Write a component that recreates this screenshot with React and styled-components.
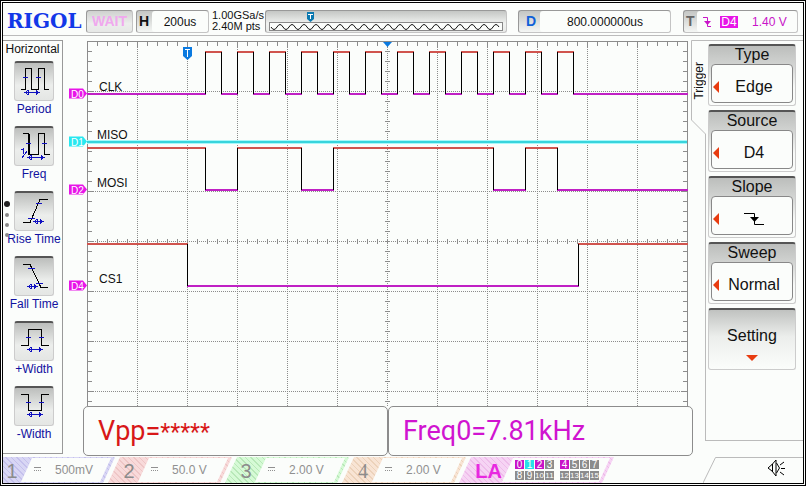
import React from 'react';
import styled, { createGlobalStyle } from 'styled-components';

const GlobalStyle = createGlobalStyle`
  * {
    box-sizing: border-box;
  }

  body {
    margin: 0;
    background: #fbfdfb;
    color: #111;
    font-family: "Liberation Sans", Arial, sans-serif;
    font-size: 12px;
  }

  button {
    padding: 0;
    color: inherit;
    font: inherit;
    cursor: pointer;
  }

  svg {
    display: block;
  }
`;

const Screen = styled.div`
  display: flex;
  flex-direction: column;
  min-height: 100vh;
  border: 3px double #000;
  overflow: hidden;
`;

const TopBar = styled.header`
  display: flex;
  align-items: center;
  gap: 3px;
  height: 33px;
  padding: 4px 5px 0 4px;
  border-bottom: 1px solid #bbb;
`;

const Logo = styled.div`
  width: 76px;
  color: #1238e8;
  font: bold 20px/22px "DejaVu Serif", serif;
`;

const panelFrame = `
  border: 1px solid #999;
  border-right-color: #c4c4c4;
  border-bottom-color: #c4c4c4;
  border-radius: 3px;
  height: 23px;
`;

const RunState = styled.button`
  ${panelFrame}
  width: 47px;
  background: linear-gradient(#cfd1cf, #eceeec 60%, #e6e8e6);
  color: #f0a8ee;
  font-size: 14px;
  font-weight: bold;
`;

const Readout = styled.div`
  ${panelFrame}
  display: flex;
  width: ${(p) => p.$width};
  margin: ${(p) => p.$margin || 0};
  background: linear-gradient(#c4c6c4, #f4f6f4);
`;

const ReadoutKey = styled.span`
  width: ${(p) => p.$width};
  padding-left: ${(p) => p.$pad};
  color: ${(p) => p.$color};
  font-size: 14px;
  font-weight: bold;
  line-height: 21px;
`;

const ReadoutValue = styled.span`
  flex: 1;
  display: flex;
  align-items: center;
  justify-content: ${(p) => (p.$start ? 'flex-start' : 'center')};
  gap: 8px;
  padding: ${(p) => (p.$start ? '1px 0 0 5px' : '2px 0 0')};
  border-radius: 3px;
  background: #fbfdfb;
  color: ${(p) => p.$color || '#111'};
`;

const SourceTag = styled.span`
  width: 18px;
  margin-right: 6px;
  background: #e815e8;
  color: #fff;
  line-height: 12px;
  text-align: center;
`;

const Acquisition = styled.div`
  width: 50px;
  font-size: 11px;
  line-height: 11px;
  white-space: nowrap;
`;

const MemoryBar = styled.div`
  ${panelFrame}
  flex: 1;
  background: linear-gradient(#c4c6c4, #f0f2f0 60%, #e8eae8);
`;

const Body = styled.main`
  display: flex;
  align-items: flex-start;
  flex: 1;
  padding-top: 4px;
`;

const MeasureMenu = styled.nav`
  position: relative;
  width: 60px;
  height: 414px;
  border: 1px solid #999;
  border-left: 0;
`;

const MenuTitle = styled.h2`
  margin: 0 0 4px;
  font-size: 12px;
  font-weight: normal;
  line-height: 16px;
  text-align: center;
`;

const MeasureButton = styled.button`
  display: flex;
  flex-direction: column;
  align-items: center;
  width: 62px;
  height: 65px;
  border: 0;
  background: none;
  color: #1111a0;
  line-height: 16px;
  white-space: nowrap;
`;

const MeasureIcon = styled.span`
  width: 40px;
  height: 40px;
  border: 1px solid #ccc;
  border-top: 2px solid #555;
  border-radius: 3px;
  background: linear-gradient(#bcbebc, #eceeec 60%, #e4e6e4);

  svg {
    margin: -2px 0 0 -1px;
  }
`;

const PageDots = styled.div`
  position: absolute;
  left: 1px;
  top: 160px;
  display: grid;
  justify-items: center;
  width: 6px;
  gap: 6px;
`;

const Dot = styled.span`
  width: ${(p) => (p.$active ? '6px' : '4px')};
  height: ${(p) => (p.$active ? '6px' : '4px')};
  border-radius: 50%;
  background: ${(p) => (p.$active ? '#222' : '#888')};
`;

const Display = styled.section`
  flex: 1;
  min-width: 0;
  padding-top: 1px;
`;

const Plot = styled.svg`
  width: 100%;
  height: auto;
`;

const Measurements = styled.div`
  display: flex;
  margin: 0 -2px 0 20px;
`;

const Measurement = styled.output`
  flex: 1 0 0;
  height: 50px;
  padding: 0 14px;
  border: 1px solid #8c8c8c;
  border-radius: 5px;
  color: ${(p) => p.$color};
  font: 27px/48px Roboto, "Liberation Sans", sans-serif;
  white-space: nowrap;
`;

const Stars = styled.span`
  font-size: 23px;
  line-height: 1;
`;

const SideMenu = styled.aside`
  display: flex;
  width: 112px;
`;

const TriggerTab = styled.div`
  position: relative;
  width: 15px;
  padding: 22px 0 0 1px;

  svg {
    position: absolute;
    left: 0;
    top: 0;
  }
`;

const TabText = styled.span`
  writing-mode: vertical-rl;
  transform: rotate(180deg);
  line-height: 14px;
`;

const SoftKeys = styled.div`
  flex: 1;
  display: grid;
  gap: 4px;
  padding: 3px 7px 70px 2px;
  border: solid #bbb;
  border-width: 1px 0;
`;

const SoftKey = styled.button`
  display: flex;
  flex-direction: column;
  align-items: center;
  height: 62px;
  padding: 0 2px;
  border: 1px solid #ccc;
  border-top: 2px solid #555;
  border-radius: 3px;
  background: ${(p) =>
    p.$plain
      ? 'linear-gradient(#c0c2c0, #eceeec 45%, #fbfdfb)'
      : 'linear-gradient(#bcbebc, #d0d2d0 30%, #f8faf8 70%, #fbfdfb)'};
  font-size: 16px;
  line-height: 17px;
`;

const SoftKeyValue = styled.span`
  display: flex;
  align-items: center;
  width: 100%;
  height: 39px;
  margin-top: 1px;
  padding-top: 6px;
  border: 1px solid #888;
  border-radius: 4px;
  background: #fbfdfb;
`;

const SoftKeyText = styled.span`
  flex: 1;
  display: flex;
  justify-content: center;
  padding-right: 4px;
`;

const SettingLabel = styled.span`
  padding: 17px 0 11px;
`;

const BottomBar = styled.footer`
  display: flex;
  height: 26px;
`;

const Channels = styled.div`
  display: flex;
  margin-left: -12px;
`;

const Channel = styled.button`
  display: flex;
  width: ${(p) => (p.$wide ? '155px' : '124px')};
  height: 26px;
  margin-right: -7px;
  padding: 1px 4px 1px 0;
  border: 0;
  background: repeating-linear-gradient(
    45deg,
    ${(p) => p.$dark} 0 1px,
    ${(p) => p.$light} 1px 4px
  );
  clip-path: polygon(12px 0, 100% 0, calc(100% - 12px) 100%, 0 100%);
`;

const ChannelName = styled.span`
  width: ${(p) => (p.$wide ? '43px' : '30px')};
  padding-left: ${(p) => (p.$wide ? '0' : '12px')};
  color: ${(p) => (p.$wide ? '#e828e0' : '#8c8c8c')};
  font-family: ${(p) => (p.$serif ? '"Liberation Serif", serif' : 'inherit')};
  font-size: 20px;
  font-weight: ${(p) => (p.$wide ? 'bold' : 'normal')};
  line-height: 26px;
  text-align: ${(p) => (p.$wide ? 'right' : 'center')};
`;

const ChannelValue = styled.span`
  flex: 1;
  display: flex;
  align-items: center;
  gap: 14px;
  height: 24px;
  padding-left: 13px;
  background: #fbfdfb;
  color: #909090;
  clip-path: polygon(11px 0, 100% 0, calc(100% - 11px) 100%, 0 100%);
`;

const Bits = styled.span`
  display: grid;
  grid-template-columns: repeat(4, 9px) 14px repeat(3, 9px);
  gap: 2px 1px;
`;

const Bit = styled.span`
  display: flex;
  justify-content: center;
  justify-self: end;
  width: 9px;
  height: 9px;
  background: ${(p) => p.$color};
  color: #fff;
  font-size: ${(p) => (p.$small ? '8px' : '10px')};
  line-height: 10px;
`;

const SoundButton = styled.button`
  margin-left: auto;
  border: 0;
  background: none;
`;

const arrow = (x1, x2, y) =>
  `M${x1} ${y}H${x2}M${x1 + 3} ${y - 2}L${x1} ${y}L${x1 + 3} ${y + 2}z` +
  `M${x2 - 3} ${y - 2}L${x2} ${y}L${x2 - 3} ${y + 2}z`;

const measures = [
  {
    label: 'Period',
    shape: 'M7 28.5H11.5V7.5H17.5V28.5H24.5V7.5H30.5V28.5H35',
    marks: 'M9 16.5h5M22 16.5h5' + arrow(11, 25, 31.5),
  },
  {
    label: 'Freq',
    shape: 'M9 7.5H14.5V28.5H24.5V7.5H30.5V28.5H36M15.5 8V28',
    marks: 'M12 17.5h5M28 17.5h5M13 25l-5 7M7 24l2-1v5' + arrow(14, 30, 31.5),
  },
  {
    label: 'Rise Time',
    shape: 'M9 31.5H16L26 8.5H34',
    marks: 'M22 12.5h6M14 27.5h7' + arrow(20, 29, 30.5),
  },
  {
    label: 'Fall Time',
    shape: 'M9 8.5H16L27 31.5H34',
    marks: 'M14 12.5h7M22 27.5h7' + arrow(14, 23, 30.5),
  },
  {
    label: '+Width',
    shape: 'M7 24.5H14.5V8.5H27.5V24.5H35',
    marks: 'M12 16.5h5M25 16.5h5' + arrow(14, 28, 28.5),
  },
  {
    label: '-Width',
    shape: 'M7 8.5H14.5V24.5H27.5V8.5H35',
    marks: 'M12 16.5h5M25 16.5h5' + arrow(14, 28, 28.5),
  },
];

// x positions are in plot units, 50 per division
const traces = [
  {
    id: 'D0',
    name: 'CLK',
    x: 12,
    high: 11,
    low: 53,
    start: 0,
    edges: Array.from({ length: 24 }, (_, i) => 118 + i * 16),
  },
  { id: 'D2', name: 'MOSI', x: 10, high: 107, low: 149, start: 1, edges: [118, 150, 214, 246, 406, 438, 470] },
  { id: 'D4', name: 'CS1', x: 12, high: 203, low: 245, start: 1, edges: [100, 491] },
];

const channels = [
  { name: '1', value: '500mV', light: '#d8d6f4', dark: '#c4c0ec' },
  { name: '2', value: '50.0 V', light: '#f8dada', dark: '#eec6c6' },
  { name: '3', value: '2.00 V', light: '#d6fad6', dark: '#b8e8b8' },
  { name: '4', value: '2.00 V', light: '#f8e4d4', dark: '#ecd2ba', serif: true },
];

const bitColors = { 0: '#c814c8', 1: '#28e0e8', 2: '#c814c8', 4: '#c814c8' };

const FallingEdge = () => (
  <svg width="20" height="14" viewBox="0 0 20 14" fill="none" stroke="#000">
    <path d="M0 1.5H10.5V12.5H20" />
    <path d="M6 5H15L10.5 10z" fill="#000" stroke="none" />
  </svg>
);

const LeftArrow = () => (
  <svg width="8" height="12" viewBox="0 0 8 12">
    <path d="M7 0V12L1 6z" fill="#e83c10" />
  </svg>
);

function Trace({ trace }) {
  const { high, low, edges } = trace;
  const xs = [0, ...edges, 600];
  return (
    <g shapeRendering="crispEdges">
      {xs.slice(1).map((end, i) => {
        const isHigh = (i + trace.start) % 2 === 1;
        return (
          <path
            key={end}
            d={`M${xs[i]} ${isHigh ? high : low}H${end + 1}`}
            stroke={isHigh ? '#d0544e' : '#c020c4'}
            strokeWidth="2"
          />
        );
      })}
      {edges.map((x) => (
        <path key={x} d={`M${x + 0.5} ${high}V${low}`} stroke="#000" />
      ))}
    </g>
  );
}

function ChannelFlag({ y, id, color = '#e815e8' }) {
  return (
    <g>
      <path d={`M-18 ${y - 5}h14l4 5l-4 5h-14z`} fill={color} />
      <text x="-16" y={y + 4} fontSize="10" fill="#fff">
        {id}
      </text>
    </g>
  );
}

function Graticule() {
  let ticks = '';
  for (let x = 10; x < 600; x += 10) {
    ticks += `M${x + 0.5} 0v${x % 50 ? 5 : 7}M${x + 0.5} 198v5`;
  }
  for (let y = 10; y < 365; y += 10) {
    const len = y % 50 ? 5 : 7;
    ticks += `M0 ${y + 0.5}h${len}M601 ${y + 0.5}h-${len}M298 ${y + 0.5}h5`;
  }
  const lines = [];
  for (let x = 50; x < 600; x += 50) lines.push(`M${x + 0.5} 0V365`);
  for (let y = 50; y < 365; y += 50) lines.push(`M0 ${y + 0.5}H600`);
  return (
    <g fill="none" stroke="#8c8c8c" shapeRendering="crispEdges">
      <path d={lines.join('')} strokeDasharray="1 1" />
      <path d={ticks} />
      <path d="M0.5 365V0.5H600.5V365" />
    </g>
  );
}

function Waveforms() {
  return (
    <Plot viewBox="-24 0 628 365" role="img" aria-label="Logic analyzer waveforms">
      <Graticule />
      <path d="M0 101H600" stroke="#a8f8fa" strokeWidth="4" />
      <path d="M0 101H600" stroke="#38d4dc" strokeWidth="2" />
      {traces.map((t) => (
        <g key={t.id}>
          <Trace trace={t} />
          <ChannelFlag y={t.low - 0.5} id={t.id} />
          <text x={t.x} y={t.low - 3} fontSize="12" fill="#111">
            {t.name}
          </text>
        </g>
      ))}
      <ChannelFlag y={100.5} id="D1" color="#28e8f0" />
      <text x="10" y="98" fontSize="12" fill="#111">
        MISO
      </text>
      <path d="M96 6h9v9l-4.500 4l-4.500 -4z" fill="#0a7ae0" />
      <path d="M98 8.500h5M100.500 8v8" stroke="#fff" />
      <path d="M296 1h9l-4.500 5z" fill="#0a7ae0" />
    </Plot>
  );
}

function MemoryView() {
  let wave = 'M5 14';
  for (let i = 0; i < 38; i++) wave += `q3 ${i % 2 ? -5 : 5} 6 0`;
  return (
    <svg width="100%" height="21" viewBox="0 0 240 21" preserveAspectRatio="none">
      <rect x="3.5" y="11.5" width="233" height="8" fill="#fbfdfb" stroke="#888" />
      <path d={wave} transform="translate(0 2)" fill="none" stroke="#111" />
      <path d="M41 1h7v7l-3.500 3l-3.500 -3z" fill="#0a78b0" />
      <path d="M42 3.500h5M44.500 3v5" stroke="#fff" />
    </svg>
  );
}

function App() {
  const keys = [
    ['Type', 'Edge'],
    ['Source', 'D4'],
    ['Slope', <FallingEdge key="slope" />],
    ['Sweep', 'Normal'],
  ];

  return (
    <Screen>
      <GlobalStyle />
      <TopBar>
        <Logo>RIGOL</Logo>
        <RunState>WAIT</RunState>
        <Readout $width="73px">
          <ReadoutKey $width="15px" $pad="2px" $color="#111">H</ReadoutKey>
          <ReadoutValue>200us</ReadoutValue>
        </Readout>
        <Acquisition>
          1.00GSa/s
          <br />
          2.40M pts
        </Acquisition>
        <MemoryBar>
          <MemoryView />
        </MemoryBar>
        <Readout $width="153px" $margin="0 9px 0 8px">
          <ReadoutKey $width="21px" $pad="7px" $color="#1060d8">D</ReadoutKey>
          <ReadoutValue>800.000000us</ReadoutValue>
        </Readout>
        <Readout $width="115px">
          <ReadoutKey $width="13px" $pad="2px" $color="#666">T</ReadoutKey>
          <ReadoutValue $start $color="#c814c8">
            <svg width="10" height="12" viewBox="0 0 10 12" fill="none" stroke="#c814c8">
              <path d="M1 1.500H5.500V10.500H9" />
              <path d="M2 5H9L5.500 9z" fill="#c814c8" stroke="none" />
            </svg>
            <SourceTag>D4</SourceTag>
            <span>1.40 V</span>
          </ReadoutValue>
        </Readout>
      </TopBar>

      <Body>
        <MeasureMenu>
          <MenuTitle>Horizontal</MenuTitle>
          {measures.map((m) => (
            <MeasureButton key={m.label}>
              <MeasureIcon>
                <svg width="40" height="40" fill="none" shapeRendering="crispEdges">
                  <path d={m.shape} stroke="#000" />
                  <path d={m.marks} stroke="#1010c0" />
                </svg>
              </MeasureIcon>
              {m.label}
            </MeasureButton>
          ))}
          <PageDots>
            <Dot $active />
            <Dot />
            <Dot />
            <Dot />
          </PageDots>
        </MeasureMenu>

        <Display>
          <Waveforms />
          <Measurements>
            <Measurement $color="#d81818">
              Vpp=<Stars>*****</Stars>
            </Measurement>
            <Measurement $color="#d014d0">Freq0=7.81kHz</Measurement>
          </Measurements>
        </Display>

        <SideMenu>
          <TriggerTab>
            <svg width="15" height="401" fill="none" stroke="#bbb">
              <path d="M15 .5H.5V80L14.500 94V401" />
            </svg>
            <TabText>Trigger</TabText>
          </TriggerTab>
          <SoftKeys>
            {keys.map(([title, value]) => (
              <SoftKey key={title}>
                {title}
                <SoftKeyValue>
                  <LeftArrow />
                  <SoftKeyText>{value}</SoftKeyText>
                </SoftKeyValue>
              </SoftKey>
            ))}
            <SoftKey $plain>
              <SettingLabel>Setting</SettingLabel>
              <svg width="12" height="6">
                <path d="M0 0H12L6 6z" fill="#e83c10" />
              </svg>
            </SoftKey>
          </SoftKeys>
        </SideMenu>
      </Body>

      <BottomBar>
        <Channels>
          {channels.map((c) => (
            <Channel key={c.name} $light={c.light} $dark={c.dark}>
              <ChannelName $serif={c.serif}>{c.name}</ChannelName>
              <ChannelValue>
                <svg width="7" height="6" stroke="#909090">
                  <path d="M0 .5H7" />
                  <path d="M0 3.500H7" strokeDasharray="1 1" />
                </svg>
                {c.value}
              </ChannelValue>
            </Channel>
          ))}
          <Channel $wide $light="#f6d4f4" $dark="#eebcea">
            <ChannelName $wide>LA</ChannelName>
            <ChannelValue>
              <Bits>
                {Array.from({ length: 16 }, (_, i) => (
                  <Bit key={i} $small={i > 9} $color={bitColors[i] || '#8c8c8c'}>
                    {i}
                  </Bit>
                ))}
              </Bits>
            </ChannelValue>
          </Channel>
        </Channels>
        <SoundButton aria-label="Sound">
          <svg width="100" height="26" fill="none">
            <path d="M0 26L12.500 .5H100" stroke="#bbb" />
            <path d="M65 11l4-3.500 4-4.500v16l-4-5zM69.500 7v8M73.500 6l3 5-3 5M77 8l4-3M78 11.500h4M77 15l4 3" stroke="#000" />
          </svg>
        </SoundButton>
      </BottomBar>
    </Screen>
  );
}

export default App;
